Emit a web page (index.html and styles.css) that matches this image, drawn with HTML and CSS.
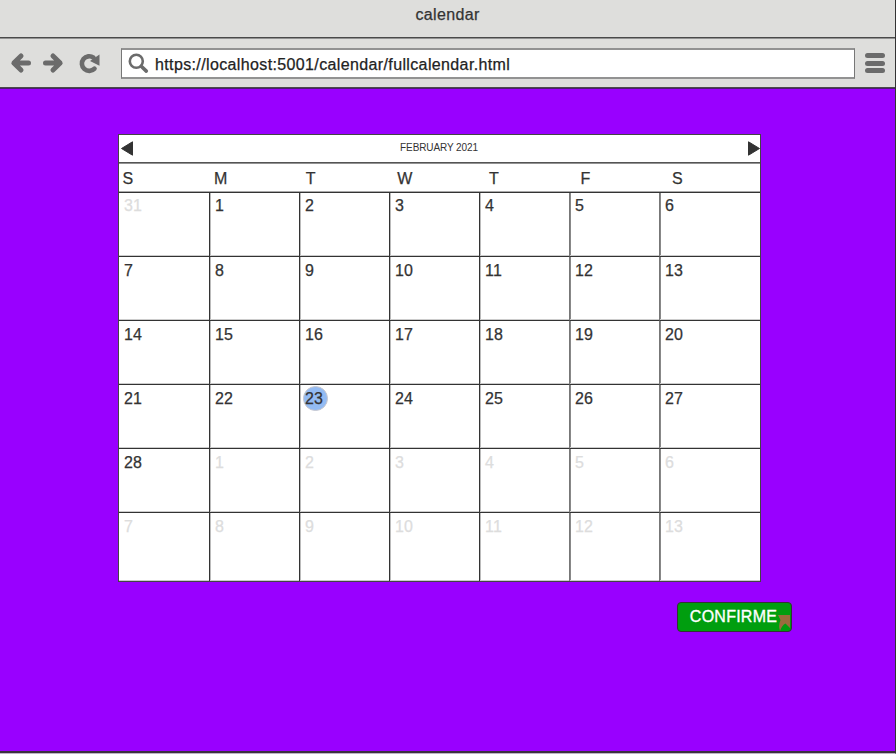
FILE: index.html
```html
<!DOCTYPE html>
<html lang="en">
<head>
<meta charset="utf-8">
<title>calendar</title>
<link rel="stylesheet" href="styles.css">
</head>
<body>
<div class="window">
  <header class="titlebar"><span class="title">calendar</span></header>
  <nav class="toolbar">
    <svg class="nav-icons" width="92" height="24" viewBox="0 0 92 24" fill="none" stroke="#6b6b6b" stroke-width="5" stroke-linecap="round" stroke-linejoin="round">
      <path d="M11 5 3.800 12l7.200 7M4 12h14.500"/>
      <path d="M43 5l7.200 7-7.200 7M50 12H35.500"/>
      <path d="M84.500 17.600A7.300 7.300 0 1 1 83.500 6.700" stroke-width="4.600"/>
      <path d="M89.500 3.500V14.800L80 10z" fill="#6b6b6b" stroke="none"/>
    </svg>
    <div class="address">
      <svg class="search" width="22" height="22" viewBox="0 0 22 22" fill="none" stroke="#6b6b6b" stroke-linecap="round">
        <circle cx="8.300" cy="8.300" r="6.500" stroke-width="2.600"/>
        <path d="M13.500 13.500l4.800 4.600" stroke-width="3.600"/>
      </svg>
      <span class="url">https://localhost:5001/calendar/fullcalendar.html</span>
    </div>
    <div class="menu"><i></i><i></i><i></i></div>
  </nav>
  <main class="content">
    <section class="calendar">
      <div class="month">
        <svg width="12" height="15" viewBox="0 0 12 15"><path d="M11.500.800V14.200L.500 7.500z" fill="#333" stroke="#333" stroke-linejoin="round"/></svg>
        <span class="month-name">FEBRUARY 2021</span>
        <svg width="12" height="15" viewBox="0 0 12 15"><path d="M.500.800V14.200L11.500 7.500z" fill="#333" stroke="#333" stroke-linejoin="round"/></svg>
      </div>
      <div class="weekdays"><span>S</span><span>M</span><span>T</span><span>W</span><span>T</span><span>F</span><span>S</span></div>
      <div class="days">
        <div class="out">31</div><div>1</div><div>2</div><div>3</div><div>4</div><div>5</div><div>6</div>
        <div>7</div><div>8</div><div>9</div><div>10</div><div>11</div><div>12</div><div>13</div>
        <div>14</div><div>15</div><div>16</div><div>17</div><div>18</div><div>19</div><div>20</div>
        <div>21</div><div>22</div><div class="today"><span>23</span></div><div>24</div><div>25</div><div>26</div><div>27</div>
        <div>28</div><div class="out">1</div><div class="out">2</div><div class="out">3</div><div class="out">4</div><div class="out">5</div><div class="out">6</div>
        <div class="out">7</div><div class="out">8</div><div class="out">9</div><div class="out">10</div><div class="out">11</div><div class="out">12</div><div class="out">13</div>
      </div>
    </section>
    <button class="confirm"><span>CONFIRME</span><svg class="marker" width="12" height="16" viewBox="0 0 12 16"><path d="M0 0h12v13L7.500 8.500Q4 10 2 16Q0 11 2.500 5z" fill="#996b3d"/></svg></button>
  </main>
</div>
</body>
</html>
```
FILE: styles.css
```css
* { box-sizing: border-box; }
body {
  margin: 0; font-family: "Liberation Sans", sans-serif; font-size: 16px; color: #333;
  -webkit-text-stroke: 0.25px currentColor;
}
.window {
  width: 896px; height: 754px;
  display: flex; flex-direction: column;
  background: #9900ff;
  border-right: 1px solid #333;
  border-bottom: 1px solid #bdb4c4;
}
.titlebar {
  height: 39px; padding-top: 5px; text-align: center; line-height: 20px;
  background: #dededc;
  border-bottom: 1px solid #929292;
  box-shadow: inset 0 -1px #4a4a4a;
}
.title { letter-spacing: 0.35px; }
.toolbar {
  height: 50px; padding: 9px 9px 0 10px;
  display: flex; align-items: flex-start;
  background: #dededc;
  border-bottom: 1px solid #4b1c70;
  box-shadow: inset 0 -1px #4a4a4a;
}
.nav-icons { margin-top: 3px; }
.address {
  width: 734px; height: 31px; margin-left: 19px; padding-left: 6px;
  display: flex; align-items: center;
  background: #fff;
  border: 1px solid #777;
  border-top: 2px solid #929292;
  border-bottom: 2px solid #929292;
}
.url { margin: 2px 0 0 5px; letter-spacing: 0.37px; color: #222; white-space: nowrap; }
.menu { margin: 5px 0 0 10px; display: flex; flex-direction: column; gap: 2.5px; }
.menu i { width: 20px; height: 5px; border-radius: 3px; background: #6b6b6b; }
.content {
  flex: 1; padding: 45px 105px 0 118px;
  border-bottom: 2px solid #3b303f;
}
.calendar { width: 643px; height: 448px; background: #fff; border: 1px solid #444; }
.month {
  height: 29px; padding: 0 0 1px 2px;
  display: flex; align-items: center; justify-content: space-between;
  border-bottom: 1px solid #929292;
  box-shadow: inset 0 -1px #555;
}
.month-name { margin: -3px 3px 0 0; font-size: 10px; letter-spacing: -0.1px; -webkit-text-stroke: 0; }
.weekdays {
  height: 29px; padding-left: 3.5px; line-height: 29px;
  display: grid; grid-template-columns: repeat(7, 91.6px);
  border-bottom: 1px solid #333;
  box-shadow: inset 0 -1px #aaa;
}
.days {
  display: grid;
  grid-template-columns: 91px repeat(5, 90px) 100px;
  grid-template-rows: repeat(5, 64px) 68px;
}
.days div {
  padding: 4px 0 0 5px; line-height: 20px; letter-spacing: 0.2px;
  border-right: 1px solid #333;
  border-bottom: 1px solid #333;
  box-shadow: inset 0 -1px #ccc, inset 1px 0 #bbb;
}
.days div:nth-child(-n+7) { padding-top: 3px; }
.days div:nth-child(7n+1) { box-shadow: inset 0 -1px #ccc; }
.days div:nth-child(7n+5) { border-right-color: #777; }
.days div:nth-child(7n+6) { border-right-color: #777; box-shadow: inset 0 -1px #ccc, inset 1px 0 #888; }
.days div:nth-child(7n) { border-right: 0; box-shadow: inset 0 -1px #ccc, inset 1px 0 #888; }
.days div:nth-child(n+36) { border-bottom: 0; }
.days .out { color: #ddd; }
.today span {
  display: flex; align-items: center;
  width: 25px; height: 25px; margin: -3px 0 0 -2px; padding-left: 1px;
  border: 1px solid #c8c8cf; border-radius: 50%;
  background: #93bbf3;
}
.confirm {
  display: flex; align-items: flex-start;
  width: 115px; height: 30px; margin: 20px 0 0 558.5px; padding: 5px 0 0 12px;
  background: #009e0f; color: #fff;
  border: 1px solid #333; border-radius: 4px;
  font: 16px/18px "Liberation Sans", sans-serif;
  letter-spacing: 0.25px;
  -webkit-text-stroke: 0.35px #fff;
}
.confirm span { width: 88px; white-space: nowrap; }
.marker { flex: none; margin: 7px 0 0; }
```
